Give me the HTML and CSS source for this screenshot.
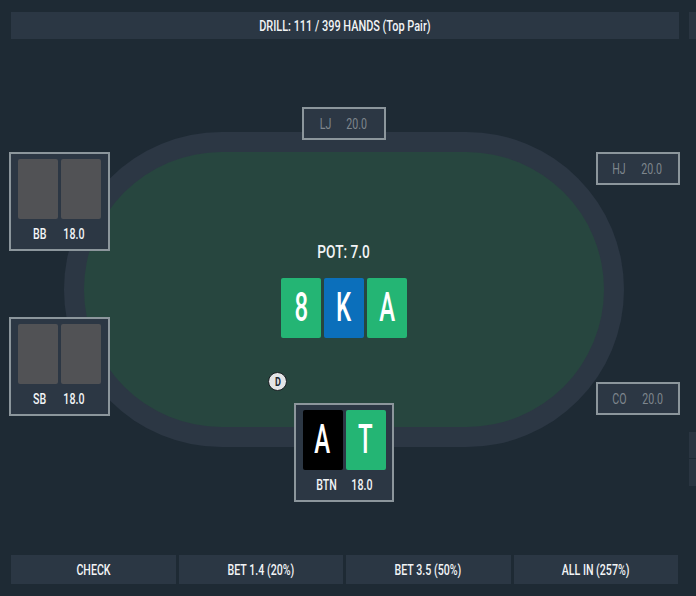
FILE: index.html
```html
<!DOCTYPE html>
<html lang="en">
<head>
<meta charset="utf-8">
<title>Drill</title>
<link rel="stylesheet" href="styles.css">
</head>
<body>
<div class="app">
  <header class="drill-bar"><span class="t">DRILL: 111 / 399 HANDS (Top Pair)</span></header>

  <main class="stage">
    <div class="felt">
      <div class="felt-inner">
        <div class="pot"><span class="t">POT: 7.0</span></div>
        <div class="board">
          <div class="card big green"><span class="face">8</span></div>
          <div class="card big blue"><span class="face">K</span></div>
          <div class="card big green"><span class="face">A</span></div>
        </div>
      </div>
    </div>

    <div class="seat seat-small seat-lj"><span class="t">LJ</span><span class="t">20.0</span></div>
    <div class="seat seat-small seat-hj"><span class="t">HJ</span><span class="t">20.0</span></div>
    <div class="seat seat-small seat-co"><span class="t">CO</span><span class="t">20.0</span></div>

    <div class="seat seat-full seat-bb">
      <div class="hand">
        <div class="card hidden"></div>
        <div class="card hidden"></div>
      </div>
      <div class="seat-info"><span class="t">BB</span><span class="t">18.0</span></div>
    </div>

    <div class="seat seat-full seat-sb">
      <div class="hand">
        <div class="card hidden"></div>
        <div class="card hidden"></div>
      </div>
      <div class="seat-info"><span class="t">SB</span><span class="t">18.0</span></div>
    </div>

    <div class="seat seat-full seat-btn">
      <div class="hand">
        <div class="card big black"><span class="face">A</span></div>
        <div class="card big green"><span class="face">T</span></div>
      </div>
      <div class="seat-info hero"><span class="t">BTN</span><span class="t">18.0</span></div>
    </div>

    <div class="dealer"><span class="t">D</span></div>

    <div class="edge edge-top"></div>
    <div class="edge edge-mid"></div>
    <div class="edge edge-low"></div>
  </main>

  <nav class="actions">
    <button class="action"><span class="t">CHECK</span></button>
    <button class="action"><span class="t">BET 1.4 (20%)</span></button>
    <button class="action"><span class="t">BET 3.5 (50%)</span></button>
    <button class="action"><span class="t">ALL IN (257%)</span></button>
  </nav>
</div>
</body>
</html>
```

FILE: styles.css
```css
* {
  box-sizing: border-box;
}

html,
body {
  margin: 0;
  padding: 0;
  background: #1e2a34;
}

body {
  font-family: Roboto, "Liberation Sans", sans-serif;
  color: #f2f4f6;
}

/* narrow display face: squeeze labels horizontally around their centre */
.t {
  display: inline-block;
  transform: scaleX(0.76);
  white-space: pre;
}

.face {
  display: inline-block;
  transform: scaleX(0.6);
}

.app {
  width: 696px;
  height: 596px;
  display: flex;
  flex-direction: column;
  padding-top: 12px;
  overflow: hidden;
}

.drill-bar {
  margin: 0 17px 0 11px;
  height: 27px;
  background: #2b3744;
  display: flex;
  align-items: center;
  justify-content: center;
  font-size: 14px;
  font-weight: 500;
}

.drill-bar .t {
  transform: scaleX(0.78);
}

/* table canvas: seats sit at fixed spots around the felt */
.stage {
  position: relative;
  height: 516px;
}

.felt {
  position: absolute;
  left: 64px;
  top: 93px;
  width: 560px;
  height: 315px;
  border-radius: 158px;
  background: #2c3744;
  padding: 20px;
}

.felt-inner {
  width: 100%;
  height: 100%;
  border-radius: 138px;
  background: #27463f;
  display: flex;
  flex-direction: column;
  align-items: center;
  padding-top: 89px;
}

.pot {
  font-size: 18px;
  font-weight: 500;
  line-height: 22px;
  height: 22px;
  margin-bottom: 15px;
}

.board,
.hand {
  display: flex;
  gap: 3px;
}

.card {
  width: 40px;
  height: 60px;
  border-radius: 2px;
  display: flex;
  align-items: center;
  justify-content: center;
}

.card.big {
  font-size: 40px;
  font-weight: 500;
  color: #ffffff;
  line-height: 1;
  padding-bottom: 1px;
}

.green {
  background: #24b574;
}

.blue {
  background: #0b6fbb;
}

.black {
  background: #000000;
}

.hidden {
  background: #515255;
}

.seat {
  position: absolute;
  background: #2c3744;
  border: 2px solid #8c969c;
}

.seat-small {
  width: 84px;
  height: 33px;
  display: flex;
  align-items: center;
  justify-content: center;
  gap: 10px;
  font-size: 14px;
  color: #7e868d;
}

.seat-lj {
  left: 302px;
  top: 68px;
}

.seat-hj {
  left: 596px;
  top: 113px;
}

.seat-co {
  left: 596px;
  top: 343px;
}

.seat-full {
  width: 101px;
  height: 99px;
  display: flex;
  flex-direction: column;
  align-items: center;
  padding-top: 5px;
}

.seat-bb {
  left: 9px;
  top: 113px;
}

.seat-sb {
  left: 9px;
  top: 278px;
}

.seat-btn {
  left: 294px;
  top: 364px;
  width: 100px;
}

.seat-info {
  flex: 1;
  display: flex;
  align-items: center;
  gap: 11px;
  font-size: 14px;
  font-weight: 500;
  padding-bottom: 1px;
}

.seat-info.hero {
  gap: 8px;
}

.dealer {
  position: absolute;
  left: 268px;
  top: 333px;
  width: 19px;
  height: 19px;
  border-radius: 50%;
  background: #e3e4e6;
  border: 1px solid #1a1f23;
  color: #1e2a34;
  font-size: 12px;
  font-weight: bold;
  display: flex;
  align-items: center;
  justify-content: center;
}

/* panels of the next slide peeking in at the right edge */
.edge {
  position: absolute;
  left: 689px;
  width: 7px;
  background: #2a3541;
}

.edge-top {
  top: -27px;
  height: 27px;
}

.edge-mid {
  top: 393px;
  height: 26px;
}

.edge-low {
  top: 420px;
  height: 27px;
}

.actions {
  margin: 0 18px 0 11px;
  height: 29px;
  display: grid;
  grid-template-columns: repeat(4, 1fr);
  gap: 3px;
}

.action {
  background: #2b3744;
  border: 0;
  color: #f2f4f6;
  font-family: inherit;
  font-size: 14px;
  font-weight: 500;
  padding: 0;
}
```
